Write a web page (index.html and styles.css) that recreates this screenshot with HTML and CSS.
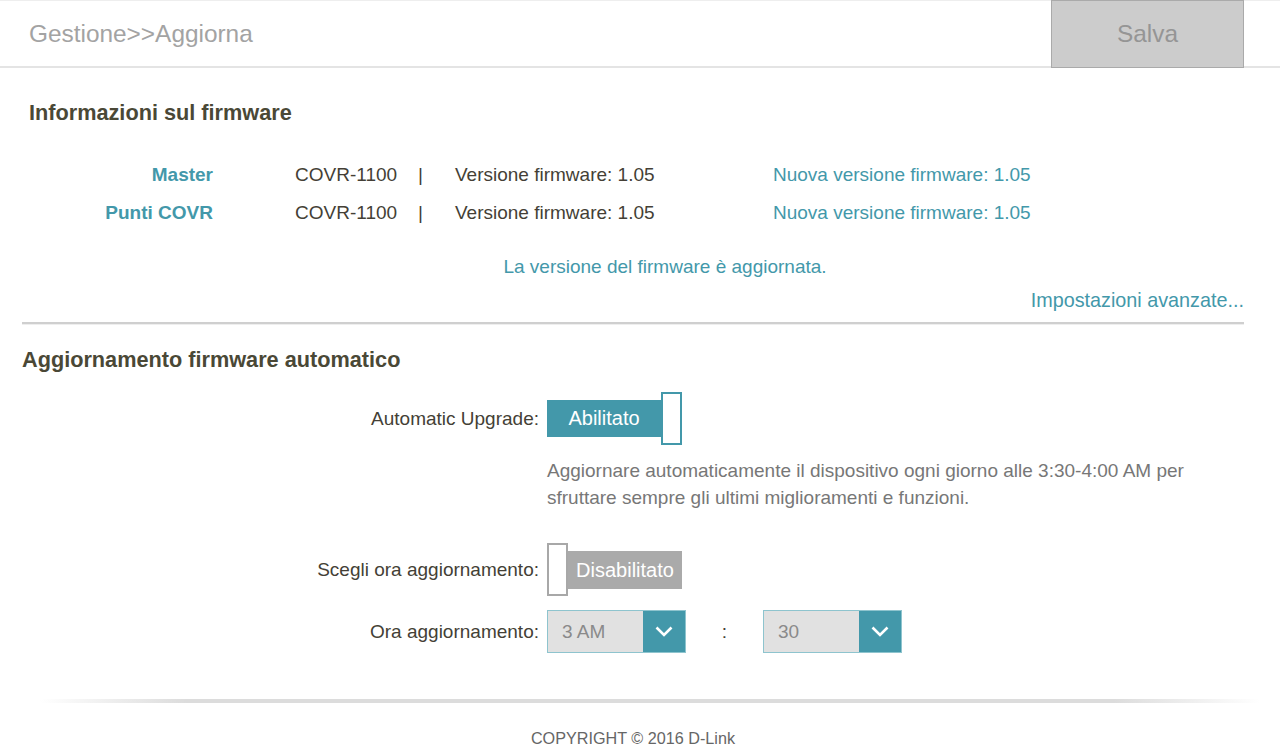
FILE: index.html
```html
<!DOCTYPE html>
<html lang="it">
<head>
  <meta charset="UTF-8">
  <title>Gestione - Aggiorna</title>
  <link rel="stylesheet" href="styles.css">
</head>
<body>
  <header class="top-bar">
    <div class="page-title">Gestione&gt;&gt;Aggiorna</div>
    <button class="save-btn">Salva</button>
  </header>

  <main class="content">
    <!-- Firmware info -->
    <section class="fw-info">
      <h2 class="section-title">Informazioni sul firmware</h2>
      <div class="fw-table">
        <div class="fw-label">Master</div>
        <div>COVR-1100</div>
        <div>|</div>
        <div>Versione firmware: 1.05</div>
        <div class="link">Nuova versione firmware: 1.05</div>

        <div class="fw-label">Punti COVR</div>
        <div>COVR-1100</div>
        <div>|</div>
        <div>Versione firmware: 1.05</div>
        <div class="link">Nuova versione firmware: 1.05</div>
      </div>
      <p class="fw-status">La versione del firmware è aggiornata.</p>
      <p class="advanced"><a href="#">Impostazioni avanzate...</a></p>
    </section>

    <hr class="divider">

    <!-- Auto upgrade -->
    <section class="auto-upgrade">
      <h2 class="section-title">Aggiornamento firmware automatico</h2>
      <div class="form-row">
        <label class="form-label">Automatic Upgrade:</label>
        <div class="toggle on">
          <span class="toggle-bar">Abilitato</span>
          <span class="toggle-knob"></span>
        </div>
      </div>
      <p class="hint">Aggiornare automaticamente il dispositivo ogni giorno alle 3:30-4:00 AM per<br>sfruttare sempre gli ultimi miglioramenti e funzioni.</p>
      <div class="form-row">
        <label class="form-label">Scegli ora aggiornamento:</label>
        <div class="toggle off">
          <span class="toggle-knob"></span>
          <span class="toggle-bar">Disabilitato</span>
        </div>
      </div>
      <div class="form-row time-row">
        <label class="form-label">Ora aggiornamento:</label>
        <div class="select">
          <span class="select-value">3 AM</span>
          <span class="select-arrow">
            <svg width="18" height="11" viewBox="0 0 18 11"><polyline points="1.5,1.5 9,9 16.5,1.5" fill="none" stroke="#fff" stroke-width="2.6"/></svg>
          </span>
        </div>
        <span class="colon">:</span>
        <div class="select">
          <span class="select-value">30</span>
          <span class="select-arrow">
            <svg width="18" height="11" viewBox="0 0 18 11"><polyline points="1.5,1.5 9,9 16.5,1.5" fill="none" stroke="#fff" stroke-width="2.6"/></svg>
          </span>
        </div>
      </div>
    </section>
  </main>

  <footer class="footer">
    <div class="footer-line"></div>
    <p class="copyright">COPYRIGHT © 2016 D-Link</p>
  </footer>
</body>
</html>
```

FILE: styles.css
```css
/* Base */
* {
  margin: 0;
  padding: 0;
  box-sizing: border-box;
}
:root {
  --teal: #4398aa;
  --text: #443f36;
  --heading: #4a4836;
  --muted: #777;
}
body {
  font-family: "Liberation Sans", Arial, sans-serif;
  font-size: 19px;
  color: var(--text);
  background: #fff;
}

/* Header */
.top-bar {
  height: 68px;
  display: flex;
  align-items: stretch;
  justify-content: space-between;
  border-top: 1px solid #eee;
  border-bottom: 2px solid #e4e4e4;
  padding: 0 36px 0 29px;
}
.page-title {
  align-self: center;
  font-size: 24.4px;
  color: #a3a3a3;
}
.save-btn {
  width: 193px;
  margin: -1px 0 -2px;
  background: #cccccc;
  border: 1px solid #aaa;
  font-family: inherit;
  font-size: 24.4px;
  color: #959595;
}

/* Content */
.content {
  padding: 0 36px 0 22px;
}
.section-title {
  font-size: 21.7px;
  line-height: 26px;
  font-weight: bold;
  color: var(--heading);
}
.fw-info {
  padding: 32px 0 0 7px;
}
.fw-table {
  display: grid;
  grid-template-columns: 184px 205px 37px 318px 1fr;
  margin-top: 30px;
  line-height: 38px;
}
.fw-table > div:nth-child(5n+2) {
  margin-left: 82px;
}
.fw-label {
  text-align: right;
  font-weight: bold;
  color: var(--teal);
}
.link,
.fw-status,
.advanced a {
  color: var(--teal);
  text-decoration: none;
}
.fw-status {
  margin-top: 22px;
  padding-left: 57px;
  text-align: center;
  line-height: 26px;
}
.advanced {
  margin-top: 7px;
  text-align: right;
  line-height: 26px;
  font-size: 19.8px;
}
.divider {
  margin-top: 9px;
  border: none;
  border-top: 2px solid #cfcfcf;
  box-shadow: 0 1px 0 #eee;
}

/* Auto upgrade */
.auto-upgrade {
  padding-top: 23px;
}
.form-row {
  display: flex;
  align-items: center;
  gap: 8px;
}
.auto-upgrade .section-title + .form-row {
  margin-top: 19px;
}
.form-label {
  width: 517px;
  text-align: right;
}
.toggle {
  display: flex;
  align-items: center;
  width: 135px;
  height: 53px;
}
.toggle-bar {
  flex: 1;
  height: 37px;
  line-height: 37px;
  text-align: center;
  color: #fff;
  font-size: 20px;
}
.toggle-knob {
  width: 21px;
  height: 53px;
  background: #fff;
  border: 2px solid var(--teal);
}
.toggle.on .toggle-bar {
  background: var(--teal);
}
.toggle.off .toggle-bar {
  background: #aaa;
  height: 38px;
  line-height: 38px;
}
.toggle.off .toggle-knob {
  border-color: #a8a8a8;
}
.hint {
  margin: 12px 0 0 525px;
  line-height: 27px;
  color: var(--muted);
}
.hint + .form-row {
  margin-top: 32px;
}
.time-row {
  margin-top: 14px;
}
.select {
  display: flex;
  width: 139px;
  height: 43px;
  background: #e1e1e1;
  border: 1px solid #8ec4ce;
}
.select-value {
  flex: 1;
  padding-left: 14px;
  line-height: 41px;
  color: #8a8a8a;
}
.select-arrow {
  width: 42px;
  background: var(--teal);
  display: flex;
  align-items: center;
  justify-content: center;
}
.colon {
  width: 61px;
  text-align: center;
}

/* Footer */
.footer {
  padding-top: 46px;
}
.footer-line {
  height: 4px;
  margin: 0 20px 0 40px;
  background: linear-gradient(to right, rgba(215,215,215,0), #dcdcdc 12%, #dcdcdc 88%, rgba(215,215,215,0));
  border-radius: 2px;
}
.copyright {
  margin-top: 26px;
  margin-left: -14px;
  text-align: center;
  font-size: 16.2px;
  color: #666;
}
```
